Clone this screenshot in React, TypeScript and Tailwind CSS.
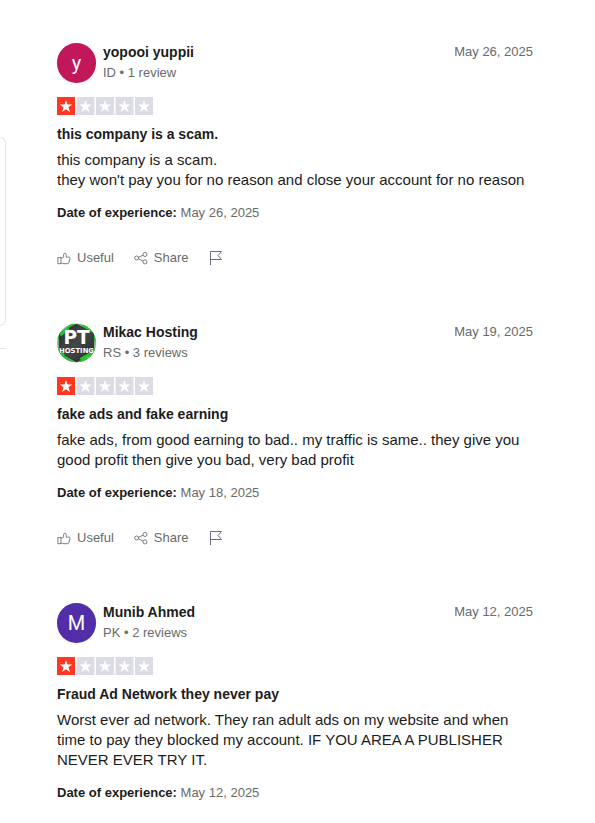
import React from 'react';

type Review = {
  name: string;
  country: string;
  count: string;
  posted: string;
  title: string;
  body: string[];
  experience: string;
  avatar: React.ReactNode;
  actions: boolean;
};

const LetterAvatar = ({ letter, color }: { letter: string; color: string }) => (
  <div
    className={`flex h-10 w-[39px] shrink-0 items-center justify-center rounded-full font-[family-name:Roboto,sans-serif] text-[20px] leading-6 text-white ${color}`}
  >
    {letter}
  </div>
);

const HostingAvatar = () => (
  <svg viewBox="0 0 40 40" className="h-10 w-[39px] shrink-0" role="img" aria-label="PT Hosting">
    <defs>
      <clipPath id="avatar-clip">
        <circle cx="20" cy="20" r="20" />
      </clipPath>
      <linearGradient id="avatar-shade" x1="0" y1="0" x2="1" y2="1">
        <stop offset="0" stopColor="#252c2d" />
        <stop offset="0.5" stopColor="#434849" />
        <stop offset="1" stopColor="#202425" />
      </linearGradient>
    </defs>
    <g clipPath="url(#avatar-clip)">
      <path d="M0 0h40v40H0z" fill="#8fae90" />
      <path
        d="M0 14L14 0h5L1 17zM28 0l12 10v9l-3-2v-6L25 3zM0 27l4-1 2 6 6 4 6 4H5L0 34zM40 25v9l-8 6H22l3-3 7-2 5-9z"
        fill="#22c52d"
      />
      <path d="M20 0l18 10v20L20 40 2 30V10z" fill="url(#avatar-shade)" />
      <path d="M3 12l9-7M24 37l12-7v-5M4 30l3 3" fill="none" stroke="#22c52d" strokeWidth="3" />
      <text
        x="20"
        y="21"
        fill="#fff"
        textAnchor="middle"
        fontFamily="DejaVu Sans, sans-serif"
        fontWeight="700"
        fontSize="19"
      >
        PT
      </text>
      <text
        x="20"
        y="30"
        fill="#fff"
        textAnchor="middle"
        fontFamily="DejaVu Sans, sans-serif"
        fontWeight="700"
        fontSize="7"
      >
        HOSTING
      </text>
    </g>
  </svg>
);

const reviews: Review[] = [
  {
    name: 'yopooi yuppii',
    country: 'ID',
    count: '1 review',
    posted: 'May 26, 2025',
    title: 'this company is a scam.',
    body: ['this company is a scam.', "they won't pay you for no reason and close your account for no reason"],
    experience: 'May 26, 2025',
    avatar: <LetterAvatar letter="y" color="bg-[#c2185b]" />,
    actions: true,
  },
  {
    name: 'Mikac Hosting',
    country: 'RS',
    count: '3 reviews',
    posted: 'May 19, 2025',
    title: 'fake ads and fake earning',
    body: ['fake ads, from good earning to bad.. my traffic is same.. they give you good profit then give you bad, very bad profit'],
    experience: 'May 18, 2025',
    avatar: <HostingAvatar />,
    actions: true,
  },
  {
    name: 'Munib Ahmed',
    country: 'PK',
    count: '2 reviews',
    posted: 'May 12, 2025',
    title: 'Fraud Ad Network they never pay',
    body: ['Worst ever ad network. They ran adult ads on my website and when time to pay they blocked my account. IF YOU AREA A PUBLISHER NEVER EVER TRY IT.'],
    experience: 'May 12, 2025',
    avatar: <LetterAvatar letter="M" color="bg-[#512da8]" />,
    actions: false,
  },
];

const Stars = () => (
  <svg viewBox="0 0 512 96" className="h-[18px] w-24" role="img" aria-label="Rated 1 out of 5 stars">
    {[0, 104, 208, 312, 416].map((x, i) => (
      <g key={x} transform={`translate(${x} 0)`}>
        <path d="M0 0h96v96H0z" fill={i === 0 ? '#ff3722' : '#dcdce6'} />
        <path d="M48 16l8 24h25L61 55l8 25-21-15-21 15 8-25-20-15h25z" fill="#fff" />
      </g>
    ))}
  </svg>
);

const ThumbIcon = () => (
  <svg viewBox="0 0 16 16" fill="none" stroke="currentColor" className="h-[14px] w-[14px]" aria-hidden="true">
    <path d="M1 7.5h3.5v7H1zM4.5 8h1.6c.8 0 1.4-.6 1.4-1.4V4c0-2 3-2 3 0v3h3.2c1 0 1.5.8 1.2 1.6l-1.5 4.9c-.2.6-.7 1-1.4 1H8c-1.5 0-2-.9-3.5-1" />
  </svg>
);

const ShareIcon = () => (
  <svg viewBox="0 0 16 16" fill="none" stroke="currentColor" className="h-[14px] w-[14px]" aria-hidden="true">
    <circle cx="3" cy="8" r="2.3" />
    <circle cx="12.5" cy="4" r="2.3" />
    <circle cx="12.5" cy="12.5" r="2.3" />
    <path d="M5.2 7.1l5.1-2.2M5.2 9l5.2 2.5" />
  </svg>
);

const FlagIcon = () => (
  <svg viewBox="0 0 14 16" fill="none" stroke="#696a8a" className="h-4 w-[14px]" aria-hidden="true">
    <path d="M1.5 15V1.5h11L9 5.5l3.5 4h-11" />
  </svg>
);

const ReviewCard = ({ review }: { review: Review }) => (
  <article>
    <header className="flex justify-between">
      <div className="flex gap-[7px]">
        {review.avatar}
        <div>
          <h3 className="text-[14px] leading-[18px] font-bold">{review.name}</h3>
          <p className="mt-0.5 text-[13px] leading-5 text-[#696a6a]">
            {review.country} • {review.count}
          </p>
        </div>
      </div>
      <time className="text-[13px] leading-[18px] text-[#696a6a]">{review.posted}</time>
    </header>

    <div className="mt-[14px] flex">
      <Stars />
    </div>

    <h2 className="mt-[9px] text-[14px] leading-5 font-bold">{review.title}</h2>
    <div className="mt-[6px] text-[15px] leading-5">
      {review.body.map((line) => (
        <p key={line}>{line}</p>
      ))}
    </div>
    <p className="mt-[13px] text-[13px] leading-5">
      <b>Date of experience:</b> <span className="text-[#696a6a]">{review.experience}</span>
    </p>

    {/* Actions */}
    {review.actions && (
      <div className="mt-[25px] flex items-center gap-5 text-[13px] leading-5 text-[#696a6a]">
        <button type="button" className="flex items-center gap-[6px]">
          <ThumbIcon />
          Useful
        </button>
        <button type="button" className="flex items-center gap-[6px]">
          <ShareIcon />
          Share
        </button>
        <button type="button" aria-label="Report review">
          <FlagIcon />
        </button>
      </div>
    )}
  </article>
);

const App = () => (
  <div className="flex min-h-screen bg-white font-['Liberation_Sans',Arial,sans-serif] text-[#1c1c1c]">
    {/* Edge of the sidebar */}
    <aside className="w-[6px] shrink-0 pt-[137px]">
      <div className="h-[189px] rounded-r-lg border border-l-0 border-[#e5e5dd]" />
      <hr className="mt-[22px] border-[#e5e5dd]" />
    </aside>
    <main className="flex min-w-0 flex-1 flex-col gap-[55px] pt-[43px] pr-[62px] pl-[51px]">
      {reviews.map((review) => (
        <ReviewCard key={review.name} review={review} />
      ))}
    </main>
  </div>
);

export default App;
